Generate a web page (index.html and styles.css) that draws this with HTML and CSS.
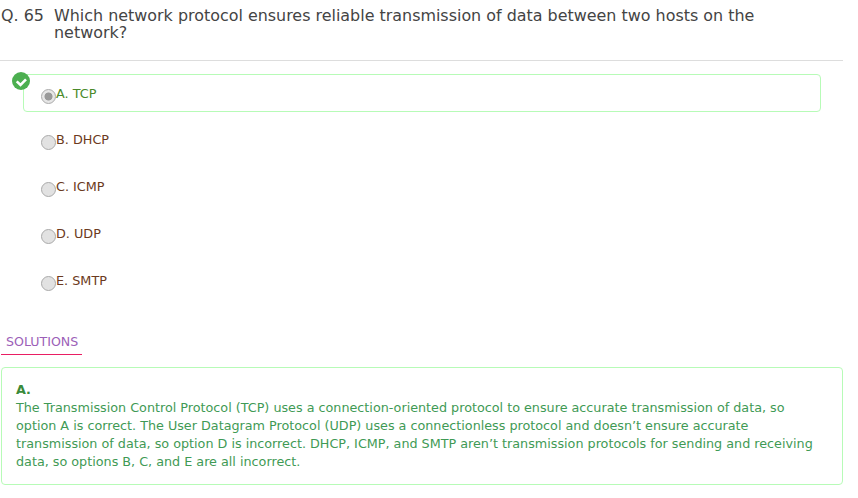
FILE: index.html
```html
<!DOCTYPE html>
<html lang="en">
<head>
<meta charset="utf-8">
<title>Q. 65</title>
<link rel="stylesheet" href="styles.css">
</head>
<body>
<main class="page">
  <header class="question">
    <span class="qno">Q. 65</span>
    <span class="qtext">Which network protocol ensures reliable transmission of data between two hosts on the network?</span>
  </header>
  <ul class="options">
    <li class="option correct">
      <svg class="tick" width="20" height="20" viewBox="0 0 20 20"><circle cx="10" cy="10" r="9" fill="#4caf50"/><path d="M5.7 10.4 9.5 14l5.5-5.7" fill="none" stroke="#fff" stroke-width="2.6"/></svg>
      <span class="radio checked"></span><span class="label">A. TCP</span>
    </li>
    <li class="option"><span class="radio"></span><span class="label">B. DHCP</span></li>
    <li class="option"><span class="radio"></span><span class="label">C. ICMP</span></li>
    <li class="option"><span class="radio"></span><span class="label">D. UDP</span></li>
    <li class="option"><span class="radio"></span><span class="label">E. SMTP</span></li>
  </ul>
  <div class="tab"><span class="tab-label">SOLUTIONS</span></div>
  <section class="solution">
    <strong class="answer">A.</strong>
    <p>The Transmission Control Protocol (TCP) uses a connection-oriented protocol to ensure accurate transmission of data, so option A is correct. The User Datagram Protocol (UDP) uses a connectionless protocol and doesn’t ensure accurate transmission of data, so option D is incorrect. DHCP, ICMP, and SMTP aren’t transmission protocols for sending and receiving data, so options B, C, and E are all incorrect.</p>
  </section>
</main>
</body>
</html>
```
FILE: styles.css
```css
* { box-sizing: border-box; }
html, body { margin: 0; padding: 0; background: #fff; }
body { font-family: "DejaVu Sans", sans-serif; }
.page { width: 843px; }
.question {
  display: flex;
  height: 61px;
  padding-top: 7px;
  border-bottom: 1px solid #ddd;
  font-size: 15.93px;
  line-height: 17px;
  color: #444;
}
.qno { width: 54px; padding-left: 1px; flex: none; }
.qtext { width: 720px; }
.options { list-style: none; margin: 13px 0 0 23px; padding: 0; width: 798px; }
.option {
  position: relative;
  display: flex;
  align-items: flex-start;
  height: 38px;
  margin-bottom: 9px;
  padding: 11px 0 0 17px;
  font-size: 12.8px;
  line-height: 16px;
  color: #6b3a20;
  border: 1px solid transparent;
}
.option.correct { margin-bottom: 8px; border-color: #b7fbb7; border-radius: 4px; color: #4a8a2a; }
.tick { position: absolute; left: -13px; top: -4px; }
.radio {
  flex: none;
  width: 15px;
  height: 15px;
  margin-top: 3px;
  border-radius: 50%;
  border: 1px solid #aaa;
  background: #e2e2e2;
}
.radio.checked { background: radial-gradient(circle, #999 0 3.6px, #e6e6e6 4.4px); }
.tab { margin-top: 32px; padding-left: 1px; }
.tab-label {
  display: inline-block;
  width: 81px;
  padding: 0 0 3px 5px;
  border-bottom: 1px solid #e91e63;
  font-size: 12.6px;
  line-height: 18px;
  color: #9c5fb8;
}
.solution {
  margin: 12px 0 0 1px;
  height: 118px;
  padding: 13px 27px 0 14px;
  border: 1px solid #b7fbb7;
  border-radius: 4px;
  font-size: 12.75px;
  line-height: 18px;
  color: #3f9a55;
}
.answer { display: block; color: #3a8a3a; }
.solution p { margin: 0; }
```
